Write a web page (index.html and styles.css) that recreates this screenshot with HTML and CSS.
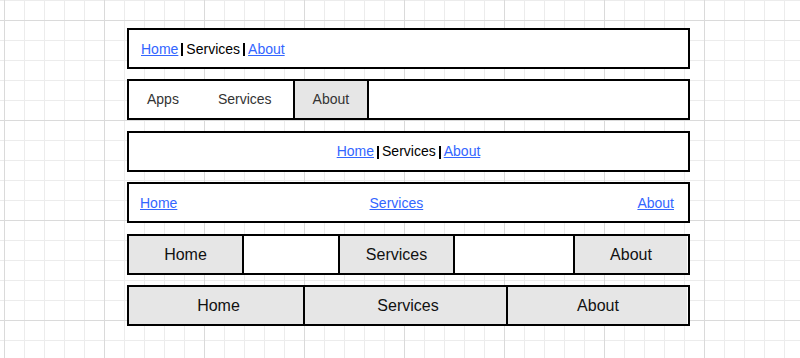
FILE: index.html
```html
<!DOCTYPE html>
<html lang="en">

<head>
    <meta charset="UTF-8">
    <meta name="viewport" content="width=device-width, initial-scale=1.0">
    <title>Navigation Bars</title>
    <link rel="stylesheet" href="styles.css">
</head>

<body>
    <div class="bars">
        <!-- breadcrumb style -->
        <div class="bar crumbs">
            <a href="#">Home</a><span class="sep"></span><span>Services</span><span class="sep"></span><a href="#">About</a>
        </div>

        <!-- tabs with active item -->
        <div class="bar tabs">
            <div class="tab">Apps</div>
            <div class="tab">Services</div>
            <div class="tab active">About</div>
        </div>

        <!-- centered breadcrumb -->
        <div class="bar crumbs center">
            <a href="#">Home</a><span class="sep"></span><span>Services</span><span class="sep"></span><a href="#">About</a>
        </div>

        <!-- spread links -->
        <div class="bar spread">
            <a href="#">Home</a>
            <a href="#" class="mid">Services</a>
            <a href="#">About</a>
        </div>

        <!-- buttons with gaps -->
        <div class="bar gapped">
            <div class="cell first">Home</div>
            <div></div>
            <div class="cell">Services</div>
            <div></div>
            <div class="cell last">About</div>
        </div>

        <!-- full width buttons -->
        <div class="bar full">
            <div class="cell">Home</div>
            <div class="cell">Services</div>
            <div class="cell">About</div>
        </div>
    </div>
</body>

</html>
```

FILE: styles.css
```css
* {
    box-sizing: border-box;
    margin: 0;
    padding: 0;
}

body {
    height: 358px;
    overflow: hidden;
    font-family: "Liberation Sans", Arial, sans-serif;
    background-color: #fff;
    background-image:
        linear-gradient(to right, #dadada 1px, transparent 1px),
        linear-gradient(to bottom, #dadada 1px, transparent 1px),
        linear-gradient(to right, #ececec 1px, transparent 1px),
        linear-gradient(to bottom, #ececec 1px, transparent 1px);
    background-size: 100px 100px, 100px 100px, 20px 20px, 20px 20px;
    background-position: 4px 0, 0 20px, 4px 0, 0 0;
}

.bars {
    display: flex;
    flex-direction: column;
    gap: 10.4px;
    width: 563px;
    margin: 28px 0 0 127px;
}

.bar {
    height: 41px;
    border: 2px solid #000;
    background-color: #fff;
    display: flex;
    align-items: center;
    font-size: 14px;
    color: #000;
}

.bar a {
    color: #3366ff;
    text-decoration: underline;
}

.crumbs {
    padding: 0 12px;
}

.crumbs.center {
    justify-content: center;
}

.sep {
    display: inline-block;
    width: 2px;
    height: 13px;
    background-color: #000;
    margin: 2px 3px 0 3px;
}

.tabs {
    align-items: stretch;
    color: #333;
}

.tab {
    display: flex;
    align-items: center;
    padding: 0 18px 1px;
    margin-right: 3px;
}

.tab.active {
    background-color: #e6e6e6;
    border-left: 2px solid #000;
    border-right: 2px solid #000;
    margin-right: 0;
}

.spread {
    justify-content: space-between;
    padding: 0 14px 0 11px;
}

.spread .mid {
    margin-right: 22px;
}

.gapped,
.full {
    display: grid;
    align-items: stretch;
    font-size: 16px;
    color: #111;
}

.gapped {
    grid-template-columns: 115px 94px 117px 118px 114px;
}

.full {
    grid-template-columns: 176px 203px 179px;
}

.cell {
    display: flex;
    align-items: center;
    justify-content: center;
    padding-top: 1px;
    background-color: #e6e6e6;
    border-left: 2px solid #000;
    border-right: 2px solid #000;
}

.gapped .first {
    border-left: none;
}

.gapped .last {
    border-right: none;
}

.full .cell {
    border-left: none;
    padding-left: 5px;
}

.full .cell:last-child {
    border-right: none;
    padding-left: 1px;
}
```
